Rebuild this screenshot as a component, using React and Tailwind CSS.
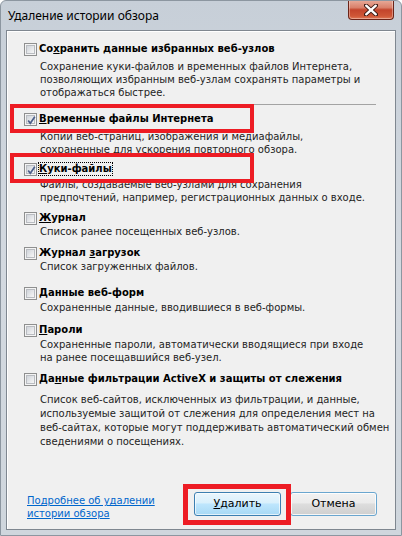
import React from 'react';

const items = [
  {
    pre: 'Со', key: 'х', post: 'ранить данные избранных веб-узлов',
    desc: ['Сохранение куки-файлов и временных файлов Интернета,', 'позволяющих избранным веб-узлам сохранять параметры и', 'отображаться быстрее.'],
    mt: 'mt-[11px]', dmt: 'mt-[4px]', lead: 'leading-[13px]',
  },
  {
    pre: '', key: 'В', post: 'ременные файлы Интернета', checked: true,
    desc: ['Копии веб-страниц, изображения и медиафайлы,', 'сохраненные для ускорения повторного обзора.'],
    mt: 'mt-[7px]', dmt: 'mt-[4px]', lead: 'leading-[13px]',
  },
  {
    pre: '', key: 'К', post: 'уки-файлы', checked: true, focus: true,
    desc: ['Файлы, создаваемые веб-узлами для сохранения', 'предпочтений, например, регистрационных данных о входе.'],
    mt: 'mt-[6px]', dmt: 'mt-[2px]', lead: 'leading-[13px]',
  },
  {
    pre: '', key: 'Ж', post: 'урнал',
    desc: ['Список ранее посещенных веб-узлов.'],
    mt: 'mt-[7px]', dmt: 'mt-0', lead: 'leading-[13px]',
  },
  {
    pre: 'Журнал ', key: 'з', post: 'агрузок',
    desc: ['Список загруженных файлов.'],
    mt: 'mt-[8px]', dmt: 'mt-0', lead: 'leading-[13px]',
  },
  {
    pre: '', key: 'Д', post: 'анные веб-форм',
    desc: ['Сохраненные данные, вводившиеся в веб-формы.'],
    mt: 'mt-[13px]', dmt: 'mt-[1px]', lead: 'leading-[13px]',
  },
  {
    pre: '', key: 'П', post: 'ароли',
    desc: ['Сохраненные пароли, автоматически вводящиеся при входе', 'на ранее посещавшийся веб-узел.'],
    mt: 'mt-[9px]', dmt: 'mt-[1px]', lead: 'leading-[13px]',
  },
  {
    pre: 'Да', key: 'н', post: 'ные фильтрации ActiveX и защиты от слежения',
    desc: ['Список веб-сайтов, исключенных из фильтрации, и данные,', 'используемые защитой от слежения для определения мест на', 'веб-сайтах, которые могут поддерживать автоматический обмен', 'сведениями о посещениях.'],
    mt: 'mt-[8px]', dmt: 'mt-[7px]', lead: 'leading-[14px]',
  },
];

function CheckBox({ checked }) {
  return (
    <span className="relative block w-[13px] h-[13px] shrink-0 border border-[#8e8f8f] bg-[#f4f4f4] p-[1px]">
      <span className="block w-full h-full border border-[#b9bcc1] bg-gradient-to-br from-[#d0d4da] to-[#f7f7f7]" />
      {checked && (
        <svg className="absolute inset-0" width="13" height="13" viewBox="0 0 13 13">
          <path d="M3.2 6.4 L5.3 9.2 L9.8 2.8" fill="none" stroke="#4c5f8a" strokeWidth="1.7" />
        </svg>
      )}
    </span>
  );
}

function Item({ item }) {
  return (
    <div className={item.mt}>
      <div className="flex items-center h-[14px] pl-[17px]">
        <CheckBox checked={item.checked} />
        <span
          className={`ml-[2px] font-bold text-[10px] leading-[12px] text-black ${
            item.focus ? 'outline outline-1 outline-dotted outline-black' : ''
          }`}
        >
          {item.pre}
          <span className="underline">{item.key}</span>
          {item.post}
        </span>
      </div>
      <div className={`${item.dmt} pl-[33px] text-[10px] ${item.lead} text-[#1e1e1e]`}>
        {item.desc.map((line) => (
          <div key={line} className="whitespace-nowrap">{line}</div>
        ))}
      </div>
    </div>
  );
}

export default function App() {
  return (
    <div className="relative w-[402px] h-[536px] overflow-hidden bg-gradient-to-b from-[#c7cfd8] via-[#d3d9e0] to-[#cfd6dd] font-['DejaVu_Sans',sans-serif] rounded-t-[6px] border border-[#8c96a0]">
      <div className="flex items-start justify-between h-[29px] pl-[7px] pr-[7px]">
        <div className="pt-[7px] text-[12px] leading-[16px] text-black font-['Noto_Sans',sans-serif]">
          Удаление истории обзора
        </div>
        <div className="w-[46px] h-[20px] mt-[-1px] rounded-b-[4px] border border-t-0 border-[#6b2418] bg-[linear-gradient(#e9ad9c,#d9806a_40%,#c3442b_52%,#cf5737_85%,#e07a58)] flex items-center justify-center shadow-[inset_0_0_0_1px_rgba(255,255,255,0.35)]">
          <svg width="14" height="12" viewBox="0 0 14 12">
            <path d="M2 1.5 L12 10.5 M12 1.5 L2 10.5" stroke="#3b1a14" strokeWidth="4.2" strokeLinecap="round" />
            <path d="M2.2 1.7 L11.8 10.3 M11.8 1.7 L2.2 10.3" stroke="#ffffff" strokeWidth="2.4" strokeLinecap="round" />
          </svg>
        </div>
      </div>

      <div className="px-[5px]">
        <div className="h-[500px] border border-[#7f8790] bg-[#f0f0f0] shadow-[inset_1px_1px_0_#ffffff]">
          <Item item={items[0]} />
          <div className="mt-[5px] ml-[10px] mr-[19px] h-px bg-[#a3a3a3]" />
          {items.slice(1).map((item) => (
            <Item key={item.key + item.post} item={item} />
          ))}

          <div className="flex items-start mt-[43px] pl-[20px]">
            <div className="w-[167px] mt-[2px] text-[10px] leading-[13px] text-[#0066cc] underline">
              <div>Подробнее об удалении</div>
              <div>истории обзора</div>
            </div>
            <div className="flex gap-[9px]">
              <button
                type="button"
                className="w-[87px] h-[24px] rounded-[3px] border border-[#3c7fb1] bg-[linear-gradient(#eaf6fd,#d9f0fc_45%,#bee6fd_50%,#a7d9f5)] text-[11px] text-black font-['DejaVu_Sans',sans-serif] shadow-[inset_0_0_0_1px_#ffffffaa]"
              >
                <span className="underline">У</span>далить
              </button>
              <button
                type="button"
                className="w-[87px] h-[24px] rounded-[3px] border border-[#6aa6cf] bg-[linear-gradient(#f2f2f2,#ebebeb_45%,#dddddd_50%,#cfcfcf)] text-[11px] text-black font-['DejaVu_Sans',sans-serif] shadow-[inset_0_0_0_1px_#ffffffcc]"
              >
                Отмена
              </button>
            </div>
          </div>
        </div>
      </div>

      <div className="absolute left-[9px] top-[103px] w-[244px] h-[29px] border-4 border-[#ed1c24]" />
      <div className="absolute left-[9px] top-[152px] w-[244px] h-[30px] border-4 border-[#ed1c24]" />
      <div className="absolute left-[182px] top-[483px] w-[108px] h-[41px] border-[5px] border-[#ed1c24]" />
    </div>
  );
}
